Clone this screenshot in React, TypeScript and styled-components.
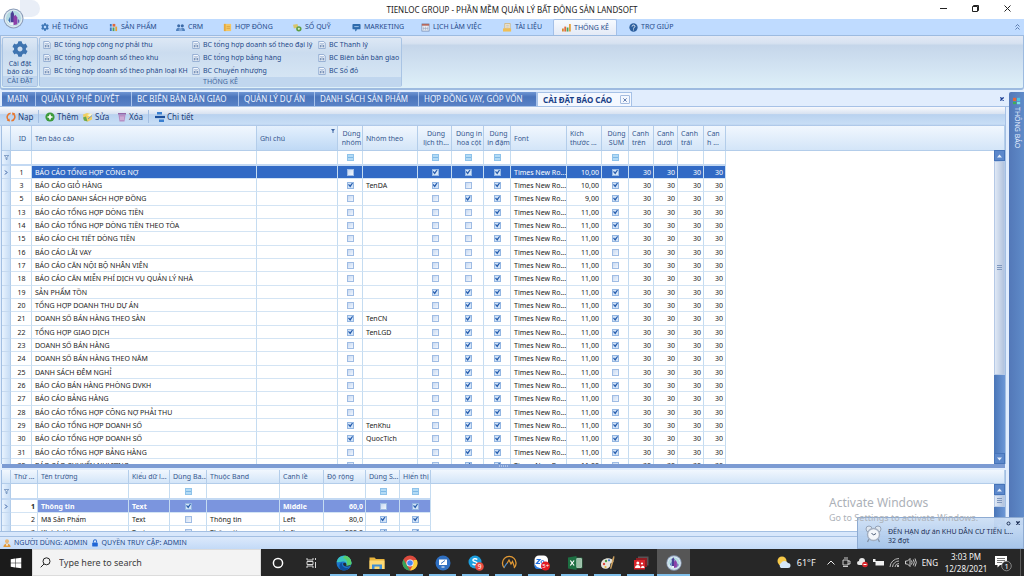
import React from 'react';
import styled, { createGlobalStyle, css } from 'styled-components';
import { FaCog, FaWindows } from 'react-icons/fa';

const uiFont = '"Noto Sans", "Open Sans", "DejaVu Sans", sans-serif';

const GlobalStyle = createGlobalStyle`
  * { box-sizing: border-box; }
  html, body { margin: 0; padding: 0; }
  body { font-family: ${uiFont}; font-size: 7px; background: #e1edfd; color: #222; overflow: hidden; }
  button, input { font-family: inherit; font-size: inherit; margin: 0; padding: 0; }
  button { border: 0; background: none; color: inherit; white-space: nowrap; }
  svg { display: block; flex: none; }
`;

const Page = styled.div`
  position: relative;
  display: flex;
  flex-direction: column;
  height: 100vh;
`;

/* ---------- title bar ---------- */
const TitleBar = styled.header`
  position: relative;
  display: flex;
  align-items: center;
  justify-content: center;
  height: 19px;
  background: #fff;
`;
const Title = styled.h1`
  margin: 0;
  font-size: 8px;
  line-height: 12px;
  font-weight: 400;
  color: #1c1c1c;
`;
const QuickAccess = styled.div`
  position: absolute;
  left: 20px;
  top: 0;
  width: 20px;
  height: 17px;
  border-radius: 0 10px 10px 0;
  background: #e9eef7;
`;
const Orb = styled.button`
  position: absolute;
  left: 3px;
  top: 8px;
  z-index: 2;
`;
const WindowButtons = styled.div`
  position: absolute;
  right: 12px;
  top: 4px;
  display: flex;
  gap: 23px;
`;

/* ---------- ribbon ---------- */
const MenuBar = styled.nav`
  display: flex;
  height: 16px;
  padding-left: 32px;
  background: #bfdbff;
`;
const MenuTab = styled.button<{ $w: number; $active?: boolean }>`
  display: flex;
  align-items: center;
  gap: 3px;
  width: ${(p) => p.$w}px;
  padding-left: 9px;
  font-size: 7px;
  line-height: 12px;
  color: #1f4a8a;
  ${(p) =>
    p.$active &&
    css`
      background: linear-gradient(#f6faff, #e4eaf6);
      border: 1px solid #a4c0e8;
      border-bottom: 0;
      border-radius: 2px 2px 0 0;
      padding-left: 8px;
      margin-right: 3px;
    `}
`;
const Collapse = styled.button`
  margin-left: auto;
  padding-right: 4px;
  color: #44659c;
`;
const Ribbon = styled.section`
  display: flex;
  gap: 1px;
  height: 55px;
  padding: 1px 2px 1px 1px;
  border: 1px solid #9dbbe0;
  border-width: 1px 1px 2px;
  border-radius: 0 0 3px 3px;
  background: linear-gradient(#e3e9f5, #d7e2f1 14%, #c5d6ea 18%, #d2e3f2 60%, #def0f8);
`;
const RibbonGroup = styled.div<{ $w: number }>`
  display: flex;
  flex-direction: column;
  width: ${(p) => p.$w}px;
  border: 1px solid #a9c4e4;
  border-radius: 2px;
  background: linear-gradient(#dde8f5, #cbdcef 30%, #d8e8f5);
  color: #1f4a8a;
`;
const GroupCaption = styled.div`
  height: 10px;
  font-size: 7px;
  line-height: 10px;
  text-align: center;
  white-space: nowrap;
  background: #c0d6ee;
  color: #44699f;
`;
const BigButton = styled.button`
  flex: 1;
  display: flex;
  flex-direction: column;
  align-items: center;
  justify-content: flex-end;
  gap: 3px;
  font-size: 7px;
  line-height: 8px;
`;
const ReportGrid = styled.div`
  flex: 1;
  display: grid;
  grid-template-columns: 149px 126px 1fr;
  grid-template-rows: repeat(3, 13px);
  padding-left: 3px;
`;
const ReportButton = styled.button`
  display: flex;
  align-items: center;
  gap: 3px;
  font-size: 7px;
  line-height: 12px;
`;

/* ---------- document tabs ---------- */
const Body = styled.div`
  flex: 1;
  min-height: 0;
  display: flex;
`;
const Workspace = styled.main`
  flex: 1;
  min-width: 0;
  display: flex;
  flex-direction: column;
`;
const DocTabs = styled.div`
  display: flex;
  height: 17px;
  padding: 2px 5px 0 2px;
  border-bottom: 1px solid #a6c1e6;
`;
const DocTab = styled.button<{ $w: number; $active?: boolean }>`
  display: flex;
  align-items: center;
  width: ${(p) => p.$w}px;
  padding-left: 5px;
  border-right: 1px solid #a8c2ea;
  font-size: 8px;
  line-height: 12px;
  color: #eef4ff;
  background: linear-gradient(#6f96d4, #4a74bb 35%, #5982c6);
  ${(p) =>
    p.$active &&
    css`
      font-weight: 700;
      color: #1a3f86;
      background: #f4f8ff;
      border: 1px solid #a6c1e6;
      border-bottom: 0;
    `}
`;
const CloseBox = styled.span`
  display: flex;
  align-items: center;
  justify-content: center;
  width: 10px;
  height: 9px;
  margin-left: auto;
  margin-right: 1px;
  border: 1px solid #a6bde0;
  border-radius: 1px;
`;
const CloseAll = styled.button`
  margin-left: auto;
  color: #1d3f94;
`;
const SideDock = styled.aside`
  width: 15px;
  margin: 2px 0 12px;
  padding-top: 5px;
  display: flex;
  flex-direction: column;
  align-items: center;
  gap: 2px;
  border-radius: 2px 0 0 0;
  background: linear-gradient(90deg, #5378b8, #5f8bc9);
  color: #e6efff;
`;
const SideLabel = styled.span`
  writing-mode: vertical-rl;
  font-size: 7px;
  line-height: 12px;
`;

/* ---------- toolbar ---------- */
const Toolbar = styled.div`
  display: flex;
  align-items: center;
  height: 19px;
  padding-left: 6px;
  border-right: 1px solid #a6c1e6;
  margin-right: 3px;
  background: linear-gradient(#f7f9fd, #d9e3f1 35%, #b9d2ef 40%, #c8def6 90%, #a8c2e4);
  color: #1f3f78;
`;
const ToolButton = styled.button<{ $w: number; $divided?: boolean }>`
  display: flex;
  align-items: center;
  gap: 2px;
  width: ${(p) => p.$w}px;
  height: 13px;
  font-size: 8px;
  line-height: 12px;
  ${(p) =>
    p.$divided &&
    css`
      border-left: 1px solid #a3bfe2;
      padding-left: 6px;
    `}
`;

/* ---------- data grids ---------- */
const Pane = styled.section<{ $grow?: boolean }>`
  position: relative;
  margin: 0 3px 0 1px;
  border: 1px solid #a3bfe2;
  border-width: 0 1px;
  background: #fff;
  overflow: hidden;
  ${(p) => (p.$grow ? 'flex: 1; min-height: 0;' : 'height: 61px; flex: none;')}
`;
const Grid = styled.table`
  width: 100%;
  table-layout: fixed;
  border-collapse: separate;
  border-spacing: 0;
`;
const HeadRow = styled.tr<{ $h: number }>`
  height: ${(p) => p.$h}px;
`;
const Th = styled.th<{ $hot?: boolean; $center?: boolean }>`
  position: relative;
  padding: 0 0 0 3px;
  border-right: 1px solid #b3cdea;
  border-bottom: 1px solid #b3cdea;
  background: ${(p) => (p.$hot ? 'linear-gradient(#e4f0fd, #bfd9f5)' : 'linear-gradient(#f1f7fe, #d3e5f8)')};
  font-size: 7px;
  line-height: 9px;
  font-weight: 400;
  text-align: ${(p) => (p.$center ? 'center' : 'left')};
  white-space: nowrap;
  overflow: hidden;
  color: #36588f;
`;
const HotMark = styled.svg`
  position: absolute;
  right: 2px;
  top: 3px;
`;
const FilterRow = styled.tr<{ $h: number }>`
  height: ${(p) => p.$h}px;
  td { border-bottom: 2px solid #c3d9f3; }
`;
const Row = styled.tr<{ $selected?: string }>`
  height: 13px;
  &:nth-child(3n) { height: 14px; }
  ${(p) =>
    p.$selected &&
    css`
      td { background: ${p.$selected}; color: #fff; }
    `}
`;
const Td = styled.td<{ $align?: 'right' | 'center'; $bold?: boolean; $plain?: boolean }>`
  padding: 0 2px 0 3px;
  border-right: 1px solid #c5dcf1;
  border-bottom: 1px solid #d3e4f4;
  font-size: 7px;
  line-height: 11px;
  text-align: ${(p) => p.$align || 'left'};
  font-weight: ${(p) => (p.$bold ? 700 : 400)};
  white-space: nowrap;
  overflow: hidden;
  ${(p) =>
    p.$plain &&
    css`
      &&& { background: #fff; color: #222; }
    `}
`;
const Marker = styled.td`
  padding: 0;
  &&& { background: linear-gradient(90deg, #e9f3fe, #c6dcf5); }
  border-right: 1px solid #b3cdea;
  border-bottom: 1px solid #c5d9f0;
  svg { margin: 0 auto; }
`;
const Blank = styled.td`
  padding: 0;
  &&& { background: #fff; border: 0; }
`;
const Check = styled.input`
  appearance: none;
  display: block;
  width: 7px;
  height: 7px;
  margin: 0 auto;
  border: 1px solid #9fbce4;
  background: linear-gradient(135deg, #c9daf2, #f1f6fd);
  &:checked { border-color: #93b6e2; background: #d3e4f8; }
  &:checked::after {
    content: '';
    display: block;
    width: 5px;
    height: 5px;
    background: #2a5fae;
    clip-path: polygon(0 45%, 20% 30%, 40% 55%, 85% 0, 100% 15%, 45% 100%);
  }
`;
const FilterCheck = styled(Check)`
  border-color: #8fc3ea;
  background: linear-gradient(#b4dbf5 40%, #7db8e6 40%, #7db8e6 60%, #b4dbf5 60%);
`;
const ScrollBar = styled.div`
  position: absolute;
  right: 0;
  bottom: 0;
  width: 11px;
  display: flex;
  flex-direction: column;
  background: linear-gradient(90deg, #4a76b8, #6c97d6);
`;
const MainScroll = styled(ScrollBar)`
  top: 24px;
`;
const FieldScroll = styled(ScrollBar)`
  top: 14px;
`;
const ScrollArrow = styled.button`
  display: flex;
  align-items: center;
  justify-content: center;
  height: 11px;
  background: #5c88cb;
  border: 1px solid #4674b9;
`;
const Thumb = styled.div<{ $grow: number }>`
  flex: ${(p) => p.$grow};
  display: flex;
  align-items: center;
  justify-content: center;
  border: 1px solid #b5c9e6;
  background: linear-gradient(90deg, #dfe8f5, #b3c4de);
`;
const Track = styled.div<{ $grow: number }>`
  flex: ${(p) => p.$grow};
`;
const Splitter = styled.div`
  display: flex;
  align-items: center;
  justify-content: center;
  height: 4px;
  flex: none;
  margin: 0 4px 2px 2px;
  background: #7c9bd3;
`;

/* ---------- status bar ---------- */
const StatusBar = styled.footer`
  flex: none;
  display: flex;
  align-items: center;
  gap: 3px;
  height: 12px;
  padding-left: 3px;
  background: linear-gradient(#dce9fb, #c3daf7);
  font-size: 7px;
  line-height: 12px;
  color: #1f4a8a;
`;
const StatusText = styled.span`
  white-space: nowrap;
`;
const PaneFoot = styled.div`
  height: 6px;
  flex: none;
  border-top: 1px solid #a3bfe2;
  border-bottom: 1px solid #a3bfe2;
  background: #d8e7fb;
`;

/* ---------- taskbar ---------- */
const Taskbar = styled.div`
  flex: none;
  display: flex;
  height: 27px;
  background: #272727;
  color: #f4f4f4;
`;
const StartButton = styled.button`
  display: flex;
  align-items: center;
  justify-content: center;
  width: 32px;
  background: #1b1b1b;
  color: #fff;
`;
const SearchBox = styled.label`
  display: flex;
  align-items: center;
  gap: 8px;
  width: 229px;
  padding-left: 7px;
  background: #f3f3f3;
  border: 1px solid #dcdcdc;
`;
const SearchInput = styled.input`
  flex: 1;
  border: 0;
  outline: 0;
  background: none;
  font-size: 9px;
  line-height: 14px;
  &::placeholder { color: #3d3d3d; opacity: 1; }
`;
const TaskButton = styled.button<{ $open?: boolean; $active?: boolean }>`
  display: flex;
  align-items: center;
  justify-content: center;
  width: 33px;
  background: ${(p) => (p.$active ? '#565656' : 'none')};
  ${(p) =>
    p.$open &&
    css`
      background-image: linear-gradient(#7fbfea, #7fbfea);
      background-size: ${p.$active ? '33px' : '27px'} 2px;
      background-position: center bottom;
      background-repeat: no-repeat;
    `}
`;
const Tray = styled.div`
  margin-left: auto;
  display: flex;
  align-items: center;
  gap: 5px;
  padding-right: 3px;
  font-size: 8px;
  line-height: 12px;
`;
const Weather = styled.button`
  display: flex;
  align-items: center;
  gap: 6px;
  margin-right: 5px;
  font-size: 9px;
`;
const Clock = styled.time`
  width: 46px;
  text-align: center;
  white-space: nowrap;
`;
const Peek = styled.span`
  width: 1px;
  height: 27px;
  margin-left: 3px;
  background: #5a5a5a;
`;

/* ---------- overlays ---------- */
const Watermark = styled.div`
  position: absolute;
  right: 43px;
  bottom: 52px;
  width: 152px;
  z-index: 4;
  color: #acb1b8;
  white-space: nowrap;
  pointer-events: none;
`;
const WatermarkTitle = styled.div`
  font-size: 12px;
  line-height: 18px;
`;
const WatermarkText = styled.div`
  font-size: 9px;
  line-height: 12px;
`;
const Toast = styled.div`
  position: absolute;
  right: 0;
  bottom: 27px;
  z-index: 3;
  display: flex;
  gap: 6px;
  width: 167px;
  height: 32px;
  padding: 7px 8px 0 7px;
  border: 1px solid #8eabd2;
  background: linear-gradient(rgba(205, 223, 245, 0.94), rgba(165, 196, 233, 0.96));
  color: #1c2f55;
`;
const ToastText = styled.p`
  margin: 2px 0 0;
  font-size: 7px;
  line-height: 9px;
  white-space: nowrap;
`;
const ToastTools = styled.div`
  position: absolute;
  right: 3px;
  top: 3px;
  display: flex;
  gap: 5px;
`;

/* ---------- icons ---------- */
const Orbit = ({ size }: { size: number }) => (
  <svg width={size} height={size} viewBox="0 0 22 22">
    <circle cx="11" cy="11" r="10.5" fill="#8b9db8" />
    <circle cx="11" cy="11" r="9.4" fill="#dfeaf3" />
    <circle cx="11" cy="11" r="8" fill="#b5dae2" />
    <path d="M4 13c2 5 6 6 9 5l-2-5z" fill="#e8f4f7" />
    <path d="M8 15V6l2-3 1.500 3v9z" fill="#4b3f94" />
    <path d="M11 18V9l2-2 2 3v7z" fill="#8d3fa8" />
    <path d="M5.500 13l2-4v7z" fill="#3f6fb5" />
    <path d="M15.500 16v-5l1.500 2v2z" fill="#6a5bb5" />
  </svg>
);
const X = ({ s = 5, w = 1 }: { s?: number; w?: number }) => (
  <svg width={s} height={s} viewBox="0 0 6 6" stroke="currentColor" strokeWidth={w} fill="none">
    <path d="M0.5 0.5l5 5M5.5 0.5l-5 5" />
  </svg>
);
const Small = ({ children, s = 9 }: { children: React.ReactNode; s?: number }) => (
  <svg width={s} height={s} viewBox="0 0 10 10">{children}</svg>
);
const ReportIcon = () => (
  <Small s={8}>
    <path d="M1 .5h6l2 2v7H1z" fill="#f4f8fd" stroke="#7d9cc8" />
    <path d="M2.500 3.500h5" stroke="#6f8fbd" strokeWidth=".8" />
    <path d="M3 8V5M5 8V4.500M7 8V5" stroke="#4d6f9f" />
  </Small>
);
const Funnel = () => (
  <svg width="5" height="5" viewBox="0 0 6 6"><path d="M.5 .5h5L3.6 3v2.5L2.4 5V3z" fill="#e6f0fb" stroke="#4c73ab" strokeWidth=".8" /></svg>
);
const Pointer = () => (
  <svg width="4" height="5" viewBox="0 0 4 5"><path d="M1 .5L3 2.5 1 4.5" fill="none" stroke="#2c559c" /></svg>
);
const ArrowMark = ({ down }: { down?: boolean }) => (
  <svg width="5" height="4" viewBox="0 0 5 4"><path d={down ? 'M0 .5h5L2.5 3.5z' : 'M0 3.5h5L2.5 .5z'} fill="#e3eefc" /></svg>
);
const Grip = () => (
  <svg width="5" height="5" viewBox="0 0 5 5"><path d="M0 .5h5M0 2.5h5M0 4.5h5" stroke="#7f97bd" /></svg>
);

const menu: { label: string; w: number; active?: boolean; icon: React.ReactNode }[] = [
  { label: 'HỆ THỐNG', w: 68, icon: <FaCog size={8} color="#3f78b8" /> },
  { label: 'SẢN PHẨM', w: 67, icon: <Small><path d="M1 1h2v3H1zM1 5h2v4H1z" fill="#3a78c4" /><path d="M4 1h3v3H4z" fill="#e2683c" /><path d="M4 5h2v4H4z" fill="#4fa35a" /><path d="M7 4h2v5H7z" fill="#e6a13a" /></Small> },
  { label: 'CRM', w: 47, icon: <Small><circle cx="3" cy="3" r="1.7" fill="#3c6ba8" /><circle cx="7" cy="3" r="1.7" fill="#3c6ba8" /><path d="M0 9c0-5 5-4 5-2 0-2 5-3 5 2z" fill="#4f80bd" /><path d="M3 6h4v3H3z" fill="#7fa5d6" /></Small> },
  { label: 'HỢP ĐỒNG', w: 70, icon: <Small><path d="M1 1h8v8H1z" fill="#f3c766" /><path d="M1 1h2v8H1z" fill="#e5a93d" /><path d="M4 4h4M4 6h4" stroke="#d39a36" strokeWidth=".7" /></Small> },
  { label: 'SỔ QUỸ', w: 59, icon: <Small><path d="M0 2l5-1 1 4-5 1z" fill="#d9c56a" /><circle cx="6.5" cy="6.5" r="3" fill="#5f9e45" /><circle cx="6.5" cy="6.5" r="1.2" fill="#d6efc5" /></Small> },
  { label: 'MARKETING', w: 69, icon: <Small><rect x=".5" y="1" width="9" height="6" rx="1" fill="#2f6cad" /><path d="M3 7h3L4 9.5z" fill="#2f6cad" /><path d="M2.500 4h5" stroke="#a9c9ec" /></Small> },
  { label: 'LỊCH LÀM VIỆC', w: 82, icon: <Small><rect x="1" y="1" width="8" height="8" fill="#eef2f8" stroke="#7188ad" strokeWidth=".8" /><path d="M1 2h8" stroke="#b5685d" strokeWidth="2" /><path d="M3 4v4M5 4v4M7 4v4M2 6h6" stroke="#8d9cba" strokeWidth=".6" /></Small> },
  { label: 'TÀI LIỆU', w: 59, icon: <Small><path d="M2 .5h6v6H2z" fill="#f5ead0" stroke="#c9a45a" strokeWidth=".7" /><path d="M0 6h9v3.500H0z" fill="#f0bf55" /><path d="M3.500 2.500h3M3.500 4.500h3" stroke="#9aa7bd" strokeWidth=".7" /></Small> },
  { label: 'THỐNG KÊ', w: 64, active: true, icon: <Small><path d="M0 6h2v3.500H0z" fill="#d98a2e" /><path d="M2.600 4h2v5.500h-2z" fill="#e2683c" /><path d="M5.200 5h2v4.500h-2z" fill="#4fa35a" /><path d="M7.800 1h2v8.500h-2z" fill="#e6a13a" /></Small> },
  { label: 'TRỢ GIÚP', w: 60, icon: <Small><circle cx="5" cy="5" r="4.6" fill="#2c5f9e" /><path d="M3.400 3.900c0-2.200 3.300-2 3.200-.1C6.500 5 5 5 5 6.300M5 7.200v1" stroke="#fff" strokeWidth="1" fill="none" /></Small> },
];

const reports = [
  'BC tổng hợp công nợ phải thu', 'BC tổng hợp doanh số theo đại lý', 'BC Thanh lý',
  'BC tổng hợp doanh số theo khu', 'BC tổng hợp bảng hàng', 'BC Biên bản bàn giao',
  'BC tổng hợp doanh số theo phân loại KH', 'BC Chuyển nhượng', 'BC Sổ đỏ',
];

const docTabs = [
  { label: 'MAIN', w: 34 }, { label: 'QUẢN LÝ PHÊ DUYỆT', w: 96 }, { label: 'BC BIÊN BẢN BÀN GIAO', w: 107 },
  { label: 'QUẢN LÝ DỰ ÁN', w: 76 }, { label: 'DANH SÁCH SẢN PHẨM', w: 104 }, { label: 'HỢP ĐỒNG VAY, GÓP VỐN', w: 118 },
];

const tools: { label: string; w: number; divided?: boolean; icon: React.ReactNode }[] = [
  { label: 'Nạp', w: 32, icon: <Small s={10}><path d="M4.600 1.200A3.900 3.900 0 0 0 2.600 8.100M5.400 8.800A3.900 3.900 0 0 0 7.400 1.900" fill="none" stroke="#e8762c" strokeWidth="1.500" /><path d="M.8 8.800l3.200.6L3.400 6.500zM9.200 1.200L6 .6l.6 2.900z" fill="#e8762c" /></Small> },
  { label: 'Thêm', w: 45, divided: true, icon: <Small s={10}><circle cx="5" cy="5" r="4.600" fill="#3d9a3a" /><path d="M5 2.500v5M2.500 5h5" stroke="#fff" strokeWidth="1.600" /></Small> },
  { label: 'Sửa', w: 34, icon: <Small s={10}><path d="M0 2.500L4 1l5 1.500v5L5 9.500 1 8.500z" fill="#f0cf62" /><path d="M0 5.500l3-1 1.500 5L1 8.500z" fill="#6aa84f" /><path d="M4 3l4-1.500 1.500 1.500-2 2z" fill="#fbf3c9" /><path d="M5 7l4-3.500" stroke="#6d93c4" strokeWidth="1" /></Small> },
  { label: 'Xóa', w: 31, icon: <Small s={10}><path d="M1.500 3h7l-1 6.500h-5z" fill="#b88fc4" /><path d="M1 1h8v1.600H1z" fill="#9566a8" /><path d="M4 4.500v3.500M6 4.500v3.500" stroke="#e8d6ee" strokeWidth=".8" /></Small> },
  { label: 'Chi tiết', w: 50, divided: true, icon: <Small s={10}><path d="M2 0h5v2.600H2zM4 7.400h5V10H4z" fill="#3a7fd0" /><path d="M0 3.900h10v2.200H0z" fill="#1c4f9c" /></Small> },
];

const columns: { title: React.ReactNode; w: number; center?: boolean; filter?: boolean }[] = [
  { title: 'ID', w: 21, center: true },
  { title: 'Tên báo cáo', w: 225 },
  { title: 'Ghi chú', w: 81 },
  { title: <>Dùng<br />nhóm</>, w: 25, center: true, filter: true },
  { title: 'Nhóm theo', w: 55 },
  { title: <>Dùng<br />lịch th...</>, w: 34, center: true, filter: true },
  { title: <>Dùng in<br />hoa cột</>, w: 32, center: true, filter: true },
  { title: <>Dùng<br />in đậm</>, w: 27, center: true, filter: true },
  { title: 'Font', w: 56 },
  { title: <>Kích<br />thước ...</>, w: 35 },
  { title: <>Dùng<br />SUM</>, w: 27, center: true, filter: true },
  { title: <>Canh<br />trên</>, w: 25 },
  { title: <>Canh<br />dưới</>, w: 24 },
  { title: <>Canh<br />trái</>, w: 26 },
  { title: <>Can<br />h ...</>, w: 22 },
];

type Report = [id: number, name: string, groupBy: string, flags: string, size: string];
/* flags: italic, uppercase, bold, sum */
const rows: Report[] = [
  [1, 'BÁO CÁO TỔNG HỢP CÔNG NỢ', '', '1111', '10,00'],
  [3, 'BÁO CÁO GIỎ HÀNG', 'TenDA', '1011', '10,00'],
  [5, 'BÁO CÁO DANH SÁCH HỢP ĐỒNG', '', '0111', '9,00'],
  [13, 'BÁO CÁO TỔNG HỢP DÒNG TIỀN', '', '0011', '11,00'],
  [14, 'BÁO CÁO TỔNG HỢP DÒNG TIỀN THEO TÒA', '', '0011', '11,00'],
  [15, 'BÁO CÁO CHI TIẾT DÒNG TIỀN', '', '0011', '11,00'],
  [16, 'BÁO CÁO LÃI VAY', '', '0010', '11,00'],
  [17, 'BÁO CÁO CĂN NỘI BỘ NHÂN VIÊN', '', '0010', '11,00'],
  [18, 'BÁO CÁO CĂN MIỄN PHÍ DỊCH VỤ QUẢN LÝ NHÀ', '', '0010', '11,00'],
  [19, 'SẢN PHẨM TỒN', '', '1111', '11,00'],
  [20, 'TỔNG HỢP DOANH THU DỰ ÁN', '', '0111', '11,00'],
  [21, 'DOANH SỐ BÁN HÀNG THEO SÀN', 'TenCN', '0111', '11,00'],
  [22, 'TỔNG HỢP GIAO DỊCH', 'TenLGD', '0111', '11,00'],
  [23, 'DOANH SỐ BÁN HÀNG', '', '0111', '11,00'],
  [24, 'DOANH SỐ BÁN HÀNG THEO NĂM', '', '0111', '11,00'],
  [25, 'DANH SÁCH ĐÊM NGHỈ', '', '0110', '11,00'],
  [26, 'BÁO CÁO BÁN HÀNG PHÒNG DVKH', '', '0111', '11,00'],
  [27, 'BÁO CÁO BẢNG HÀNG', '', '0110', '11,00'],
  [28, 'BÁO CÁO TỔNG HỢP CÔNG NỢ PHẢI THU', '', '0111', '11,00'],
  [29, 'BÁO CÁO TỔNG HỢP DOANH SỐ', 'TenKhu', '0111', '11,00'],
  [30, 'BÁO CÁO TỔNG HỢP DOANH SỐ', 'QuocTich', '0111', '11,00'],
  [31, 'BÁO CÁO TỔNG HỢP BẢNG HÀNG', '', '0111', '11,00'],
  [32, 'BÁO CÁO CHUYỂN NHƯỢNG', '', '0110', '11,00'],
];

const fieldColumns: { title: string; w: number; filter?: boolean; align?: 'right' | 'center' }[] = [
  { title: 'Thứ ...', w: 27, align: 'right' }, { title: 'Tên trường', w: 91 }, { title: 'Kiểu dữ l...', w: 41 },
  { title: 'Dùng Ba...', w: 37, filter: true }, { title: 'Thuộc Band', w: 73 }, { title: 'Canh lề', w: 44 },
  { title: 'Độ rộng', w: 42, align: 'right' }, { title: 'Dùng S...', w: 34, filter: true }, { title: 'Hiển thị', w: 31, filter: true },
];
const fields: (string | boolean)[][] = [
  ['1', 'Thông tin', 'Text', true, '', 'Middle', '60,0', false, true],
  ['2', 'Mã Sản Phẩm', 'Text', false, 'Thông tin', 'Left', '80,0', true, true],
  ['3', 'Khách Hàng', 'Text', false, 'Thông tin', 'Left', '200,0', true, true],
];

const flag = (on: boolean, label: string) => <Check type="checkbox" defaultChecked={on} aria-label={label} />;

const ReportTable = () => (
  <Grid>
    <colgroup>
      <col style={{ width: 9 }} />
      {columns.map((c, i) => <col key={i} style={{ width: c.w }} />)}
      <col />
    </colgroup>
    <thead>
      <HeadRow $h={25}>
        <Th />
        {columns.map((c, i) => (
          <Th key={i} $center={c.center} $hot={i === 2}>
            {c.title}
            {i === 2 && <HotMark width="4" height="4" viewBox="0 0 4 4"><path d="M0 0h4L2.500 2v2h-1V2z" fill="#3f66a3" /></HotMark>}
          </Th>
        ))}
        <Th />
      </HeadRow>
      <FilterRow $h={15}>
        <Marker><Funnel /></Marker>
        {columns.map((c, i) => (
          <Td key={i}>{c.filter && <FilterCheck type="checkbox" aria-label="Lọc" />}</Td>
        ))}
        <Blank />
      </FilterRow>
    </thead>
    <tbody>
      {rows.map(([id, name, groupBy, flags, size], i) => (
        <Row key={id} $selected={i === 0 ? '#316ac5' : undefined}>
          <Marker>{i === 0 && <Pointer />}</Marker>
          <Td $align="center" $plain={i === 0}>{id}</Td>
          <Td>{name}</Td>
          <Td />
          <Td>{flag(groupBy !== '', 'Dùng nhóm')}</Td>
          <Td>{groupBy}</Td>
          <Td>{flag(flags[0] === '1', 'Dùng lịch')}</Td>
          <Td>{flag(flags[1] === '1', 'Dùng in hoa')}</Td>
          <Td>{flag(flags[2] === '1', 'Dùng in đậm')}</Td>
          <Td>Times New Ro...</Td>
          <Td $align="right">{size}</Td>
          <Td>{flag(flags[3] === '1', 'Dùng SUM')}</Td>
          <Td $align="right">30</Td>
          <Td $align="right">30</Td>
          <Td $align="right">30</Td>
          <Td $align="right">30</Td>
          <Blank />
        </Row>
      ))}
    </tbody>
  </Grid>
);

const FieldTable = () => (
  <Grid>
    <colgroup>
      <col style={{ width: 9 }} />
      {fieldColumns.map((c) => <col key={c.title} style={{ width: c.w }} />)}
      <col />
    </colgroup>
    <thead>
      <HeadRow $h={14}>
        <Th />
        {fieldColumns.map((c) => <Th key={c.title}>{c.title}</Th>)}
        <Th />
      </HeadRow>
      <FilterRow $h={16}>
        <Marker><Funnel /></Marker>
        {fieldColumns.map((c) => (
          <Td key={c.title}>{c.filter && <FilterCheck type="checkbox" aria-label="Lọc" />}</Td>
        ))}
        <Blank />
      </FilterRow>
    </thead>
    <tbody>
      {fields.map((f, i) => (
        <Row key={i} $selected={i === 0 ? '#7b95de' : undefined}>
          <Marker>{i === 0 && <Pointer />}</Marker>
          {f.map((v, j) => (
            <Td key={j} $align={fieldColumns[j].align} $bold={i === 0} $plain={i === 0 && j === 0}>
              {typeof v === 'boolean' ? flag(v, fieldColumns[j].title) : v}
            </Td>
          ))}
          <Blank />
        </Row>
      ))}
    </tbody>
  </Grid>
);

const App16 = ({ children }: { children: React.ReactNode }) => (
  <svg width="16" height="16" viewBox="0 0 16 16" fontFamily="Noto Sans, sans-serif">{children}</svg>
);

const taskApps: { name: string; icon: React.ReactNode; open?: boolean; active?: boolean }[] = [
  { name: 'Cortana', icon: <App16><circle cx="8" cy="8" r="4.600" fill="none" stroke="#fff" strokeWidth="1.500" /></App16> },
  { name: 'Task View', icon: <App16><path d="M4 3v2h6V3M4 13v-2h6v2M4 6.500h6v3H4zM12.500 3v2M12.500 7v6" fill="none" stroke="#d8d8d8" /></App16> },
  { name: 'Edge', open: true, icon: <App16><circle cx="8" cy="8" r="7.500" fill="#1b74c9" /><path d="M.6 7A7.500 7.500 0 0 1 15.500 8c0 3-4 3.500-5.500 2.500 1-1.500 0-4-3-4S1.500 8 .6 7z" fill="#3cc5c0" /><path d="M9 .6A7.500 7.500 0 0 1 15.500 8c0 2.500-3 3.200-5 2.700C12 8 11 4 7 3z" fill="#58cf6b" /><path d="M6 7.500c-1 4 3 6.500 7.500 5A7.500 7.500 0 0 1 6 15.200C2 13 3 8.500 6 7.500z" fill="#0f4f9e" /><path d="M7.200 8.200c-.8 2.400 1.800 3.800 5.800 3 1.200-.3 2-1 2.400-1.700-1.500 1-3.800 1.500-5.400 1 .8-.9.3-2.300-.8-2.800z" fill="#262c33" /></App16> },
  { name: 'File Explorer', open: true, icon: <App16><path d="M.5 2.500h5l1.500 1.500h8.500v10H.5z" fill="#e9b43c" /><path d="M.5 5.500h15v8.500H.5z" fill="#fbd975" /><path d="M3 14V9.500h10V14h-2.500v-2.500h-5V14z" fill="#3f8fd6" /></App16> },
  { name: 'Chrome', open: true, icon: <App16><circle cx="8" cy="8" r="7.500" fill="#dd4b3e" /><path d="M1.500 4.200L5 10.500 8 15.500A7.500 7.500 0 0 1 1.500 4.200z" fill="#35a35a" /><path d="M8 15.500L11.500 9V5h3.400A7.500 7.500 0 0 1 8 15.500z" fill="#f9cf3b" /><circle cx="8" cy="8" r="3.600" fill="#fff" /><circle cx="8" cy="8" r="2.800" fill="#4285f4" /></App16> },
  { name: 'Remote', open: true, icon: <App16><circle cx="8" cy="8" r="7.500" fill="#2f6fc1" /><path d="M4 4.500h8v5.500H4zM6.500 11.500h3v1h-3z" fill="#fff" /><path d="M6 8.500l4-3" stroke="#2f6fc1" /></App16> },
  { name: 'Skype', open: true, icon: <App16><circle cx="7" cy="7" r="6.500" fill="#1c9fe0" /><path d="M9.300 4.600C8 3.200 4.800 3.500 4.900 5.200 5 7 9.300 6.200 9.200 8.300c-.1 1.800-3.400 1.900-4.700.5" fill="none" stroke="#fff" strokeWidth="1.400" /><circle cx="11.500" cy="11.500" r="4.300" fill="#e8493f" /><text x="9.700" y="14" fontSize="6.500" fill="#fff">9</text></App16> },
  { name: 'Monitor', open: true, icon: <App16><path d="M3.500 13A6.800 6.800 0 1 1 13 13" fill="none" stroke="#e39a35" strokeWidth="1.300" /><path d="M6 8.500L8 5l2 4 1.500-2.500 2 5.500" fill="none" stroke="#e39a35" strokeWidth="1.200" /><path d="M3 12.500L6 8" stroke="#4f8fd0" strokeWidth="1.300" /></App16> },
  { name: 'Zalo', open: true, icon: <App16><rect x=".5" y=".5" width="13.500" height="13.500" rx="4.500" fill="#fff" /><path d="M.5 9v2a3 3 0 0 0 3 3h5L3 12z" fill="#2a7de6" /><path d="M2.500 4.500h3.500L2.500 8.500H6" fill="none" stroke="#1f6fe0" strokeWidth="1.200" /><circle cx="8.500" cy="7" r="1.500" fill="none" stroke="#1f6fe0" /><circle cx="11.500" cy="11" r="4.500" fill="#e31b23" /><text x="8.300" y="13.400" fontSize="6" fill="#fff">5+</text></App16> },
  { name: 'Excel', open: true, icon: <App16><path d="M8 3h7v10H8z" fill="#f2f7f3" stroke="#2c7a4a" strokeWidth=".8" /><path d="M10 5h4M10 7h4M10 9h4M10 11h4" stroke="#2c7a4a" strokeWidth=".9" /><path d="M1 2.500l8.500-1.500v14L1 13.500z" fill="#1d6f42" /><path d="M3.300 5.500l3.800 5M7.100 5.500l-3.800 5" stroke="#fff" strokeWidth="1.200" /></App16> },
  { name: 'Paint', open: true, icon: <App16><path d="M1 9.500C1 4.500 6 2.500 10 3.500c4 1 4.500 4 1.500 4.500-2 .3-.5 2.500-2 4C7 15 1 14.500 1 9.500z" fill="#e6e4dc" /><circle cx="4" cy="9" r="1.200" fill="#d9463c" /><circle cx="6" cy="6" r="1.200" fill="#4d9e45" /><circle cx="9" cy="5.300" r="1.100" fill="#3a77c9" /><circle cx="5.500" cy="12" r="1.100" fill="#e7b53c" /><path d="M10 13.500l2.500-10L13.500 1l1 .5-.3 2.500-3 10z" fill="#cfa25f" /></App16> },
  { name: 'Contacts', open: true, icon: <App16><path d="M5 1.500h10.500v9H5z" fill="#5a5254" /><path d="M3 3h11v9H3z" fill="#8e1d22" /><path d="M1 5h11v9.500H1z" fill="#d8232a" /><circle cx="4.800" cy="8" r="1.500" fill="#fff" /><circle cx="9" cy="8.500" r="1.100" fill="#fff" /><path d="M2 13c0-4 5.500-4 5.500 0zM8 13c0-3 3.500-3 3.500 0z" fill="#fff" /></App16> },
  { name: 'Landsoft', open: true, active: true, icon: <Orbit size={16} /> },
];

export default function App() {
  return (
    <Page>
      <GlobalStyle />
      <TitleBar>
        <QuickAccess />
        <Orb aria-label="Menu"><Orbit size={21} /></Orb>
        <Title>TIENLOC GROUP - PHẦN MỀM QUẢN LÝ BẤT ĐỘNG SẢN LANDSOFT</Title>
        <WindowButtons>
          <button aria-label="Minimize"><svg width="9" height="9" viewBox="0 0 9 9"><path d="M1 4.500h7" stroke="#222" /></svg></button>
          <button aria-label="Restore"><svg width="9" height="9" viewBox="0 0 9 9"><path d="M2.500 2.500v-1h5v5h-1M1.500 2.500h5v5h-5z" fill="none" stroke="#222" /></svg></button>
          <button aria-label="Close"><svg width="9" height="9" viewBox="0 0 9 9"><path d="M1.500 1.500l6 6M7.500 1.500l-6 6" stroke="#222" /></svg></button>
        </WindowButtons>
      </TitleBar>

      <MenuBar>
        {menu.map((m) => (
          <MenuTab key={m.label} $w={m.w} $active={m.active}>{m.icon}{m.label}</MenuTab>
        ))}
        <Collapse aria-label="Thu gọn">
          <svg width="5" height="6" viewBox="0 0 5 6"><path d="M.5 2.500l2-2 2 2M.5 5.500l2-2 2 2" fill="none" stroke="currentColor" strokeWidth=".8" /></svg>
        </Collapse>
      </MenuBar>

      <Ribbon>
        <RibbonGroup $w={36}>
          <BigButton>
            <FaCog size={16} color="#3f74b0" />
            <span>Cài đặt<br />báo cáo</span>
          </BigButton>
          <GroupCaption>CÀI ĐẶT</GroupCaption>
        </RibbonGroup>
        <RibbonGroup $w={363}>
          <ReportGrid>
            {reports.map((r) => <ReportButton key={r}><ReportIcon />{r}</ReportButton>)}
          </ReportGrid>
          <GroupCaption>THỐNG KÊ</GroupCaption>
        </RibbonGroup>
      </Ribbon>

      <Body>
        <Workspace>
          <DocTabs>
            {docTabs.map((t) => <DocTab key={t.label} $w={t.w}>{t.label}</DocTab>)}
            <DocTab $w={95} $active>CÀI ĐẶT BÁO CÁO<CloseBox><X s={4} /></CloseBox></DocTab>
            <CloseAll aria-label="Đóng"><X s={4} w={2} /></CloseAll>
          </DocTabs>
          <Toolbar>
            {tools.map((t) => (
              <ToolButton key={t.label} $w={t.w} $divided={t.divided}>{t.icon}{t.label}</ToolButton>
            ))}
          </Toolbar>
          <Pane $grow>
            <ReportTable />
            <MainScroll>
              <ScrollArrow aria-label="Lên"><ArrowMark /></ScrollArrow>
              <Thumb $grow={214}><Grip /></Thumb>
              <Track $grow={79} />
              <ScrollArrow aria-label="Xuống"><ArrowMark down /></ScrollArrow>
            </MainScroll>
          </Pane>
          <Splitter><svg width="9" height="2" viewBox="0 0 9 2"><path d="M0 1h9" stroke="#dce8fa" strokeDasharray="1 1" /></svg></Splitter>
          <Pane>
            <FieldTable />
            <FieldScroll>
              <ScrollArrow aria-label="Lên"><ArrowMark /></ScrollArrow>
              <Thumb $grow={11}><Grip /></Thumb>
              <Track $grow={15} />
              <ScrollArrow aria-label="Xuống"><ArrowMark down /></ScrollArrow>
            </FieldScroll>
          </Pane>
          <PaneFoot />
        </Workspace>
        <SideDock>
          <Small s={8}><path d="M0 1h4v4H0z" fill="#e2683c" /><path d="M5 1h4v4H5z" fill="#4fc3e0" /><path d="M0 6h4v3H0z" fill="#3fae5a" /><path d="M5 6h4v3H5z" fill="#7fe0e8" /></Small>
          <SideLabel>THÔNG BÁO</SideLabel>
        </SideDock>
      </Body>

      <StatusBar>
        <Small s={8}><circle cx="5" cy="2.800" r="2.500" fill="#e8b777" /><path d="M.5 10c0-6 9-6 9 0z" fill="#e39a3a" /><path d="M3.500 6.500h3L5 9z" fill="#fff" /></Small>
        <StatusText>NGƯỜI DÙNG: ADMIN</StatusText>
        <Small s={8}><path d="M3 4.500V3a2 2 0 0 1 4 0v1.500" fill="none" stroke="#2f6fd0" strokeWidth="1.300" /><rect x="1.500" y="4.300" width="7" height="5.200" rx="1.200" fill="#1f66d6" /></Small>
        <StatusText>QUYỀN TRUY CẬP: ADMIN</StatusText>
      </StatusBar>

      <Taskbar>
        <StartButton aria-label="Start"><FaWindows size={12} /></StartButton>
        <SearchBox>
          <svg width="11" height="11" viewBox="0 0 11 11"><circle cx="6.500" cy="4.300" r="3.500" fill="none" stroke="#222" /><path d="M4 7L.7 10.300" stroke="#222" /></svg>
          <SearchInput type="text" placeholder="Type here to search" aria-label="Search" />
        </SearchBox>
        {taskApps.map((a) => (
          <TaskButton key={a.name} aria-label={a.name} $open={a.open} $active={a.active}>{a.icon}</TaskButton>
        ))}
        <Tray>
          <Weather>
            <svg width="14" height="13" viewBox="0 0 14 13"><circle cx="5" cy="5" r="4.500" fill="#f7c948" /><path d="M4 12a3 3 0 0 1 0-5 4 4 0 0 1 7 0 2.500 2.500 0 0 1 0 5z" fill="#d5e6f7" /></svg>
            61°F
          </Weather>
          <svg width="10" height="10" viewBox="0 0 10 10"><path d="M1.500 6.500L5 3l3.500 3.500" fill="none" stroke="#eee" /></svg>
          <svg width="11" height="11" viewBox="0 0 11 11"><path d="M2 3h5v5H2zM7 4h2v3H7M2 9.500h5M3 1h4" fill="none" stroke="#ddd" strokeWidth=".9" /></svg>
          <svg width="11" height="11" viewBox="0 0 11 11"><path d="M2 8a2 2 0 0 1 0-4 3 3 0 0 1 6 0v4z" fill="#e8e8e8" /><circle cx="8" cy="7.500" r="2.800" fill="#d9262c" /><path d="M6.500 7.500h3" stroke="#fff" /></svg>
          <svg width="11" height="11" viewBox="0 0 11 11"><path d="M2.500 4H11v4.500H2.500zM0 2h2.500v3H0z" fill="#f0f0f0" /></svg>
          <svg width="11" height="11" viewBox="0 0 11 11"><path d="M1 10A9 9 0 0 1 10 1.500M3.500 10A6.500 6.500 0 0 1 10 4M6 10a4 4 0 0 1 4-3.500" fill="none" stroke="#bbb" /><circle cx="9" cy="9" r="1" fill="#eee" /></svg>
          <svg width="12" height="11" viewBox="0 0 12 11"><path d="M.5 4h2L5 1.500v8L2.500 7h-2zM6.500 3.500q1.200 2 0 4M8.300 2.500q2 3 0 6M10 1.500q2.600 4 0 8" fill="none" stroke="#ddd" strokeWidth=".9" /></svg>
          <span>ENG</span>
          <Clock>3:03 PM<br />12/28/2021</Clock>
          <svg width="18" height="18" viewBox="0 0 18 18" fontFamily="Noto Sans, sans-serif"><path d="M1 2h12v9H6l-2.500 2.500V11H1z" fill="#fff" /><path d="M3 4.500h8M3 6.500h8M3 8.500h5" stroke="#555" strokeWidth=".8" /><circle cx="12.500" cy="12" r="4.800" fill="#2b2b2b" stroke="#999" strokeWidth=".8" /><text x="10.500" y="14.800" fontSize="7.500" fill="#fff">1</text></svg>
          <Peek />
        </Tray>
      </Taskbar>

      <Toast>
        <svg width="17" height="18" viewBox="0 0 17 18"><circle cx="4" cy="4" r="3" fill="#dfe7f0" stroke="#8493a8" strokeWidth=".8" /><circle cx="13" cy="4" r="3" fill="#dfe7f0" stroke="#8493a8" strokeWidth=".8" /><path d="M4 14l-1.500 3M13 14l1.500 3" stroke="#8493a8" strokeWidth="1.300" /><circle cx="8.500" cy="9.500" r="6" fill="#f3f6fa" stroke="#a3afc1" strokeWidth="1.400" /><path d="M6.500 8l2 2L11 8.500" fill="none" stroke="#4a5a75" /></svg>
        <ToastText>ĐẾN HẠN dự án KHU DÂN CƯ TIẾN L...<br />32 đợt</ToastText>
        <ToastTools>
          <svg width="5" height="5" viewBox="0 0 5 5"><circle cx="2.500" cy="2.500" r="1.500" fill="none" stroke="#1c2f55" /></svg>
          <X s={4} w={2} />
        </ToastTools>
      </Toast>
      <Watermark>
        <WatermarkTitle>Activate Windows</WatermarkTitle>
        <WatermarkText>Go to Settings to activate Windows.</WatermarkText>
      </Watermark>
    </Page>
  );
}
